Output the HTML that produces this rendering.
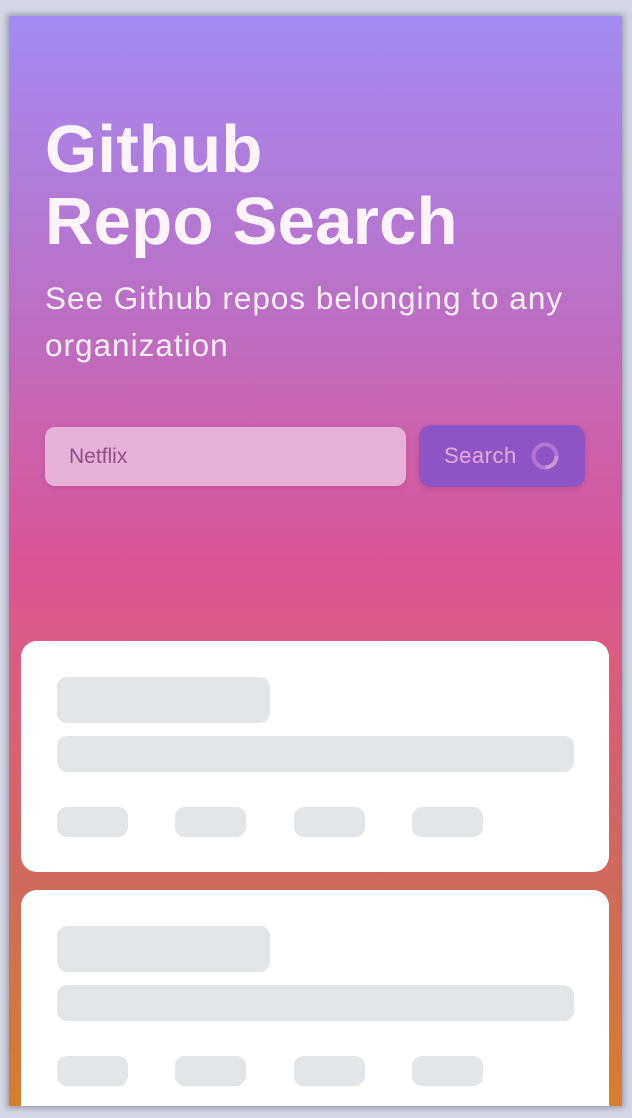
<!DOCTYPE html>
<html><head><meta charset="utf-8"><style>
html,body{margin:0;padding:0}
body{width:632px;height:1118px;background:#d5d8e4;position:relative;overflow:hidden;font-family:"Liberation Sans",sans-serif}
.page{position:absolute;left:9px;top:16px;width:613px;height:1090px;overflow:hidden;
background:linear-gradient(180deg,#a28cf2 0%,#bf6cc0 30%,#da5493 50%,#da5d80 60%,#cf6a5a 80%,#d4802f 100%);
box-shadow:0 0 6px 2px rgba(80,80,110,.45)}
h1{position:absolute;left:36px;top:98px;margin:0;font-size:67px;line-height:72px;font-weight:bold;color:#fcf4fa;letter-spacing:0.3px}
.sub{position:absolute;left:36px;top:259px;margin:0;font-size:31.5px;line-height:47px;color:#fbeef6;width:570px;letter-spacing:1px}
.input{position:absolute;left:36px;top:411px;width:361px;height:59px;border-radius:10px;background:#e8b2d6;box-shadow:0 2px 6px rgba(0,0,0,.08);color:#8c4f87;font-size:21px;line-height:59px;box-sizing:border-box;padding-left:24px}
.btn{position:absolute;left:410px;top:409px;width:166px;height:62px;border-radius:12px;background:#8f55c5;box-shadow:0 2px 6px rgba(0,0,0,.1);color:#e8a8dc;font-size:22px;line-height:62px;box-sizing:border-box;padding-left:25px;letter-spacing:0.5px}
.btn svg{position:absolute;left:111px;top:16px}
.card{position:absolute;left:12px;width:588px;height:231px;background:#fff;border-radius:16px}
.s{position:absolute;background:#e4e5e9;border-radius:10px}
</style></head><body>
<div class="page">
<h1>Github<br>Repo Search</h1>
<p class="sub">See Github repos belonging to any organization</p>
<div class="input">Netflix</div>
<div class="btn">Search<svg width="30" height="30" viewBox="0 0 30 30"><circle cx="15" cy="15" r="11.5" fill="none" stroke="#b276d2" stroke-width="4"/><path d="M26.5 15A11.5 11.5 0 0 1 15 26.5" fill="none" stroke="#d194d6" stroke-width="4"/></svg></div>
<div class="card" style="top:625px">
<div class="s" style="left:36px;top:36px;width:213px;height:46px"></div>
<div class="s" style="left:36px;top:95px;width:517px;height:36px"></div>
<div class="s" style="left:36px;top:166px;width:71px;height:30px"></div>
<div class="s" style="left:154px;top:166px;width:71px;height:30px"></div>
<div class="s" style="left:273px;top:166px;width:71px;height:30px"></div>
<div class="s" style="left:391px;top:166px;width:71px;height:30px"></div>
</div>
<div class="card" style="top:874px">
<div class="s" style="left:36px;top:36px;width:213px;height:46px"></div>
<div class="s" style="left:36px;top:95px;width:517px;height:36px"></div>
<div class="s" style="left:36px;top:166px;width:71px;height:30px"></div>
<div class="s" style="left:154px;top:166px;width:71px;height:30px"></div>
<div class="s" style="left:273px;top:166px;width:71px;height:30px"></div>
<div class="s" style="left:391px;top:166px;width:71px;height:30px"></div>
</div>
</div>
</body></html>
